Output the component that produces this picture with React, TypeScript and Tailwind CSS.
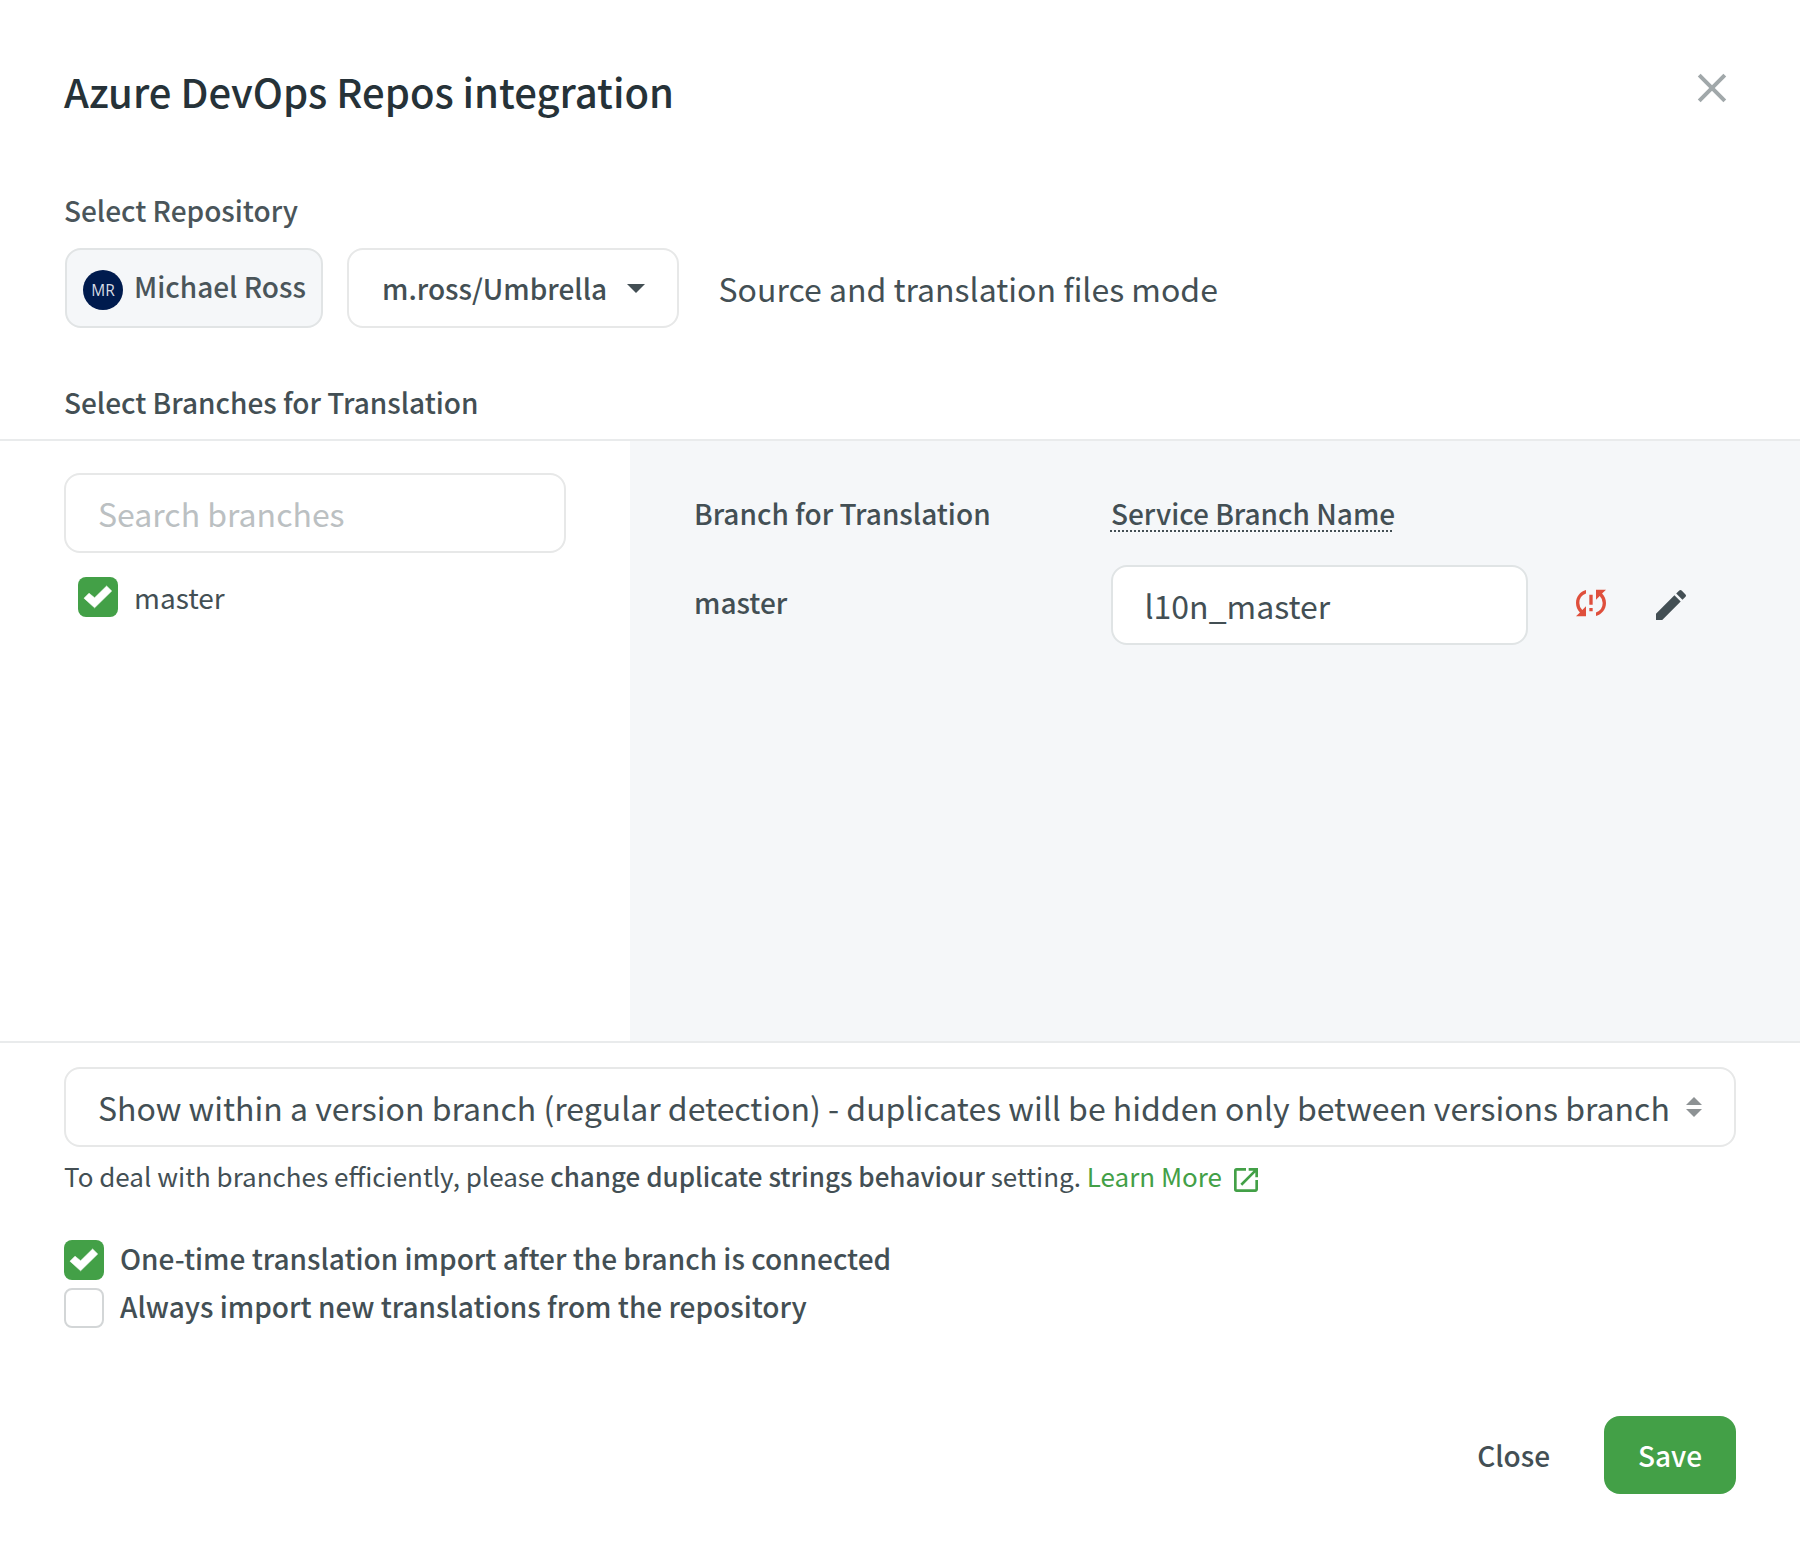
import { MdEdit, MdOpenInNew, MdSyncProblem } from "react-icons/md";

function CheckBox({ checked }: { checked: boolean }) {
  if (!checked) {
    return <span className="h-10 w-10 shrink-0 rounded-lg border-2 border-[#d3d6d7] bg-white" />;
  }
  return (
    <span className="h-10 w-10 shrink-0 rounded-lg bg-[#43a047]">
      <svg viewBox="0 0 40 40" className="h-10 w-10">
        <path
          d="M6 21.2 11 16.2 16.6 20.8 28.6 9 33.7 14 16.6 30.8Z"
          fill="#fff"
          stroke="#fff"
          strokeWidth="0.6"
          strokeLinejoin="round"
        />
      </svg>
    </span>
  );
}

function Header() {
  return (
    <header className="flex items-start justify-between pt-[61px] pr-[73px] pl-16">
      <h1 className="text-[40px] leading-[60px] font-medium text-[#263238]">
        Azure DevOps Repos integration
      </h1>
      <button type="button" aria-label="Close dialog" className="mt-3">
        <svg viewBox="0 0 30 30" className="block h-[30px] w-[30px]">
          <path d="M2.2 2.2 27.8 27.8M27.8 2.2 2.2 27.8" stroke="#a1a8aa" strokeWidth="4" />
        </svg>
      </button>
    </header>
  );
}

function RepositoryRow() {
  return (
    <section className="mt-[69px] px-16">
      <h2 className="leading-10 font-medium text-[#4a555a]">Select Repository</h2>
      <div className="mt-[18px] ml-px flex h-20 items-center">
        <div className="flex h-20 w-[258px] items-center rounded-2xl border-2 border-[#e1e4e5] bg-[#f5f7f9] pl-4">
          <span className="mt-1 flex h-10 w-10 items-center justify-center rounded-full bg-[#001b4e] pt-px font-['Open_Sans'] text-[15.5px] text-[#d5dae3]">
            MR
          </span>
          <span className="mb-1 ml-[11px] leading-10 font-medium whitespace-nowrap text-[#4a555a]">
            Michael Ross
          </span>
        </div>
        <button
          type="button"
          className="ml-6 flex h-20 w-[332px] items-center rounded-2xl border-2 border-[#e7e8e8] bg-white pl-[33px]"
        >
          <span className="leading-10 font-medium">m.ross/Umbrella</span>
          <svg viewBox="0 0 18 9" className="ml-5 h-[9px] w-[18px]">
            <path d="M0 0H18L9 9Z" fill="#434f54" />
          </svg>
        </button>
        <span className="ml-[39.5px] text-[32px] leading-[46px]">Source and translation files mode</span>
      </div>
    </section>
  );
}

function Branches() {
  return (
    <section className="mt-[54px]">
      <h2 className="px-16 leading-10 font-medium">Select Branches for Translation</h2>
      <div className="mt-[17px] flex h-[604px] border-y-2 border-[#e9ebec]">
        <div className="w-[630px] shrink-0 pt-8 pr-16 pl-16">
          <input
            placeholder="Search branches"
            className="block h-20 w-[502px] rounded-2xl border-2 border-[#e7e8e8] bg-white px-8 text-[32px] leading-[46px] placeholder:text-[#bbc0c2]"
          />
          <label className="mt-6 ml-3.5 flex items-center gap-4">
            <CheckBox checked />
            <span className="leading-10">master</span>
          </label>
        </div>
        <div className="flex-1 bg-[#f5f7f9] pt-[52px] pl-16">
          <div className="flex leading-10 font-medium">
            <span className="w-[417px]">Branch for Translation</span>
            <span className="relative">
              Service Branch Name
              <span className="absolute top-[37px] -left-px h-0.5 w-[282px] bg-[repeating-linear-gradient(90deg,#434f54_0_2px,transparent_2px_4px)]" />
            </span>
          </div>
          <div className="mt-8 flex items-center">
            <span className="mb-1.5 w-[417px] leading-10 font-medium">master</span>
            <input
              defaultValue="l10n_master"
              className="block h-20 w-[417px] rounded-2xl border-2 border-[#e0e4e5] bg-white px-[31.5px] text-[32px] leading-[46px]"
            />
            <MdSyncProblem className="mb-1 ml-[43px] h-10 w-10 text-[#df4f3c]" />
            <MdEdit className="ml-10 h-10 w-10 text-[#434f54]" />
          </div>
        </div>
      </div>
    </section>
  );
}

function Options() {
  return (
    <section className="px-16 pt-6">
      <button
        type="button"
        className="flex h-20 w-full items-center justify-between rounded-2xl border-2 border-[#e7e8e8] bg-white pr-8 pl-8"
      >
        <span className="text-[32px] leading-[46px] whitespace-nowrap">
          Show within a version branch (regular detection) - duplicates will be hidden only between versions branch
        </span>
        <svg viewBox="0 0 16 20" className="h-5 w-4 shrink-0">
          <path d="M0 8 8 0 16 8ZM0 12 8 20 16 12Z" fill="#8d9294" />
        </svg>
      </button>
      <p className="mt-2.5 flex h-[37px] items-start text-[26px] leading-[37px] whitespace-pre">
        <span>To deal with branches efficiently, please </span>
        <span className="font-medium">change duplicate strings behaviour</span>
        <span> setting. </span>
        <a className="flex text-[#43a047]">
          Learn More
          <MdOpenInNew className="mt-[7px] ml-2 h-8 w-8" />
        </a>
      </p>
      <div className="mt-[46px] flex flex-col gap-2 font-medium">
        <label className="flex h-10 items-center gap-4">
          <CheckBox checked />
          <span className="mb-1 leading-10">One-time translation import after the branch is connected</span>
        </label>
        <label className="flex h-10 items-center gap-4">
          <CheckBox checked={false} />
          <span className="mb-1 leading-10">Always import new translations from the repository</span>
        </label>
      </div>
    </section>
  );
}

function Footer() {
  return (
    <footer className="mt-[88px] flex items-center justify-end gap-[54px] px-16 font-medium">
      <button type="button" className="leading-10">
        Close
      </button>
      <button type="button" className="h-[78px] w-[132px] rounded-2xl bg-[#43a047] leading-10 text-white">
        Save
      </button>
    </footer>
  );
}

export default function App() {
  return (
    <div className="h-[1560px] w-[1800px] overflow-hidden bg-white font-['Noto_Sans_CJK_SC',sans-serif] text-[28px] text-[#434f54]">
      <Header />
      <RepositoryRow />
      <Branches />
      <Options />
      <Footer />
    </div>
  );
}
